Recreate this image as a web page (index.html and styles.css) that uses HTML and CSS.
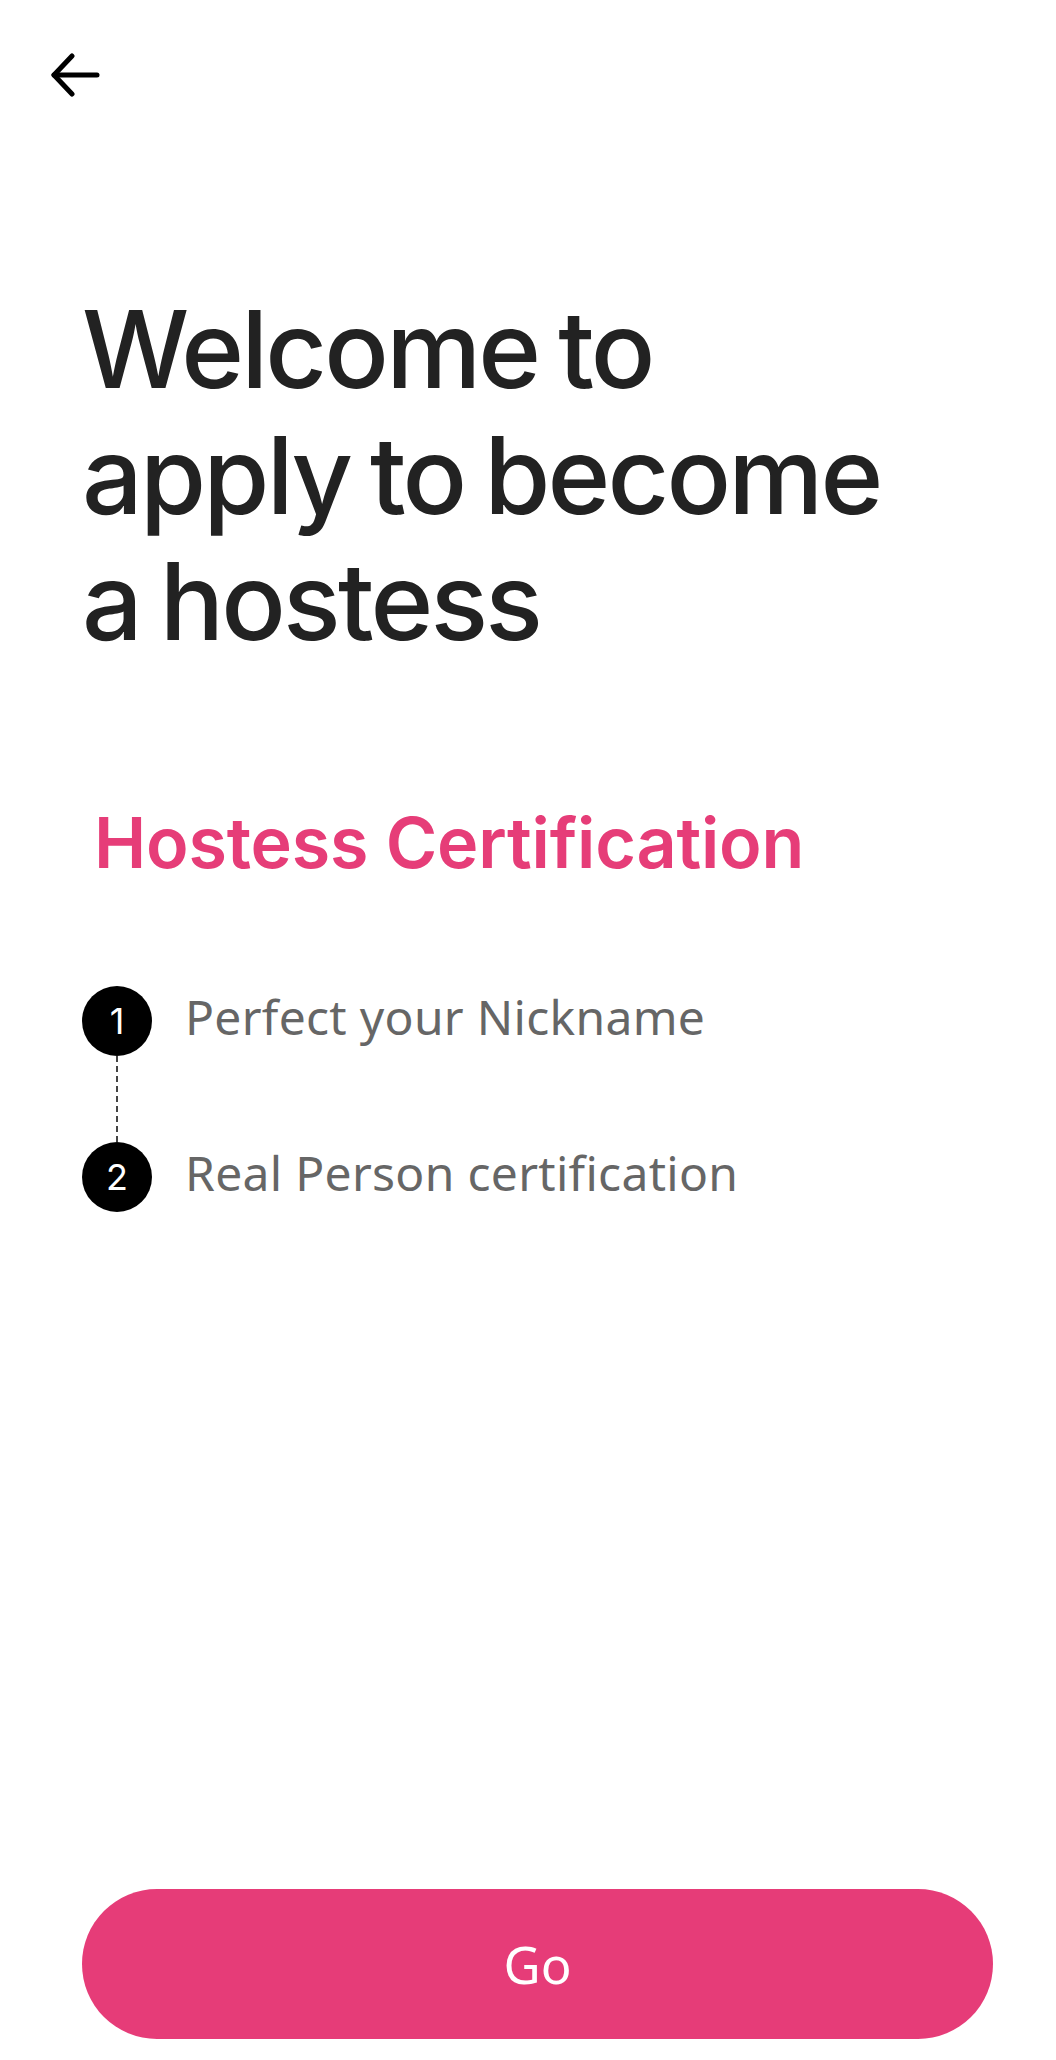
FILE: index.html
```html
<!DOCTYPE html>
<html lang="en">
<head>
    <meta charset="UTF-8">
    <meta name="viewport" content="width=device-width, initial-scale=1.0">
    <title>Hostess Certification</title>
    <link rel="stylesheet" href="styles.css">
</head>
<body>
    <div class="page">
        <div class="top-bar">
            <button class="back-btn" aria-label="Back">
                <svg width="49" height="44" viewBox="0 0 49 44" fill="none" stroke="#000" stroke-width="5" stroke-linecap="round" stroke-linejoin="round">
                    <path d="M3 22H46"/>
                    <path d="M21 3L3 22L21 41"/>
                </svg>
            </button>
        </div>

        <h1 class="title">Welcome to<br>apply to become<br>a hostess</h1>

        <h2 class="subtitle">Hostess Certification</h2>

        <div class="steps">
            <div class="step">
                <div class="step-num">1</div>
                <div class="step-label">Perfect your Nickname</div>
            </div>
            <div class="step-line"></div>
            <div class="step">
                <div class="step-num">2</div>
                <div class="step-label">Real Person certification</div>
            </div>
        </div>

        <button class="go-btn">Go</button>
    </div>
</body>
</html>
```

FILE: styles.css
```css
* {
    margin: 0;
    padding: 0;
    box-sizing: border-box;
}

body {
    font-family: Inter, "Liberation Sans", sans-serif;
    background: #fff;
    color: #222;
}

.page {
    min-height: 100vh;
    display: flex;
    flex-direction: column;
    padding: 53px 63px 21px 82px;
}

.top-bar {
    height: 44px;
    margin-left: -31px;
}

.back-btn {
    background: none;
    border: none;
    cursor: pointer;
    display: block;
}

.back-btn svg {
    display: block;
}

.title {
    margin-top: 189px;
    font-size: 107px;
    line-height: 126px;
    font-weight: 500;
    letter-spacing: -2.8px;
    word-spacing: -6px;
    color: #222;
}

.subtitle {
    margin-top: 137px;
    margin-left: 12px;
    font-size: 70px;
    line-height: 84px;
    font-weight: 600;
    letter-spacing: -0.2px;
    color: #e63d78;
}

.steps {
    margin-top: 101px;
    display: flex;
    flex-direction: column;
}

.step {
    display: flex;
    align-items: center;
    gap: 33px;
    height: 70px;
}

.step-num {
    width: 70px;
    height: 70px;
    border-radius: 50%;
    background: #000;
    color: #fff;
    display: flex;
    align-items: center;
    justify-content: center;
    font-size: 36px;
    font-weight: 400;
}

.step-label {
    font-family: "Noto Sans", sans-serif;
    font-size: 48px;
    letter-spacing: 0.3px;
    color: #666;
    margin-top: -10px;
}

.step-line {
    width: 0;
    height: 86px;
    margin-left: 34px;
    border-left: 2px dashed #444;
}

.go-btn {
    margin-top: auto;
    width: 911px;
    height: 150px;
    border: none;
    border-radius: 75px;
    background: #e63c78;
    color: #fff;
    font-family: "Noto Sans", sans-serif;
    font-size: 51px;
    cursor: pointer;
}
```
